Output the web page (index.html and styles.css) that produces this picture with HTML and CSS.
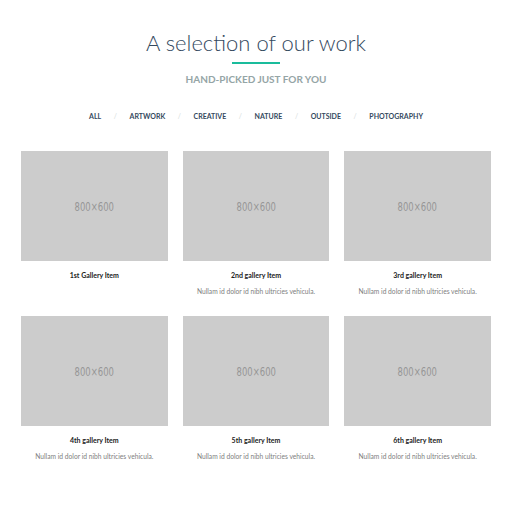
FILE: index.html
```html
<!DOCTYPE html>
<html lang="en">
<head>
<meta charset="utf-8">
<title>Gallery</title>
<link rel="stylesheet" href="styles.css">
</head>
<body>
<section class="portfolio">
  <header class="head">
    <h1 class="title">A selection of our work</h1>
    <div class="rule"></div>
    <p class="subtitle">HAND-PICKED JUST FOR YOU</p>
  </header>
  <nav class="filters">
    <a class="filter">ALL</a><span class="sep">/</span>
    <a class="filter">ARTWORK</a><span class="sep">/</span>
    <a class="filter">CREATIVE</a><span class="sep">/</span>
    <a class="filter">NATURE</a><span class="sep">/</span>
    <a class="filter">OUTSIDE</a><span class="sep">/</span>
    <a class="filter">PHOTOGRAPHY</a>
  </nav>
  <div class="grid">
    <div class="item">
      <div class="thumb"><span>800×600</span></div>
      <h3 class="item-title">1st Gallery Item</h3>
    </div>
    <div class="item">
      <div class="thumb"><span>800×600</span></div>
      <h3 class="item-title">2nd gallery Item</h3>
      <p class="item-desc">Nullam id dolor id nibh ultricies vehicula.</p>
    </div>
    <div class="item">
      <div class="thumb"><span>800×600</span></div>
      <h3 class="item-title">3rd gallery Item</h3>
      <p class="item-desc">Nullam id dolor id nibh ultricies vehicula.</p>
    </div>
    <div class="item">
      <div class="thumb"><span>800×600</span></div>
      <h3 class="item-title">4th gallery Item</h3>
      <p class="item-desc">Nullam id dolor id nibh ultricies vehicula.</p>
    </div>
    <div class="item">
      <div class="thumb"><span>800×600</span></div>
      <h3 class="item-title">5th gallery Item</h3>
      <p class="item-desc">Nullam id dolor id nibh ultricies vehicula.</p>
    </div>
    <div class="item">
      <div class="thumb"><span>800×600</span></div>
      <h3 class="item-title">6th gallery Item</h3>
      <p class="item-desc">Nullam id dolor id nibh ultricies vehicula.</p>
    </div>
  </div>
</section>
</body>
</html>
```
FILE: styles.css
```css
* { box-sizing: border-box; }
html, body { margin: 0; padding: 0; background: #fff; }
body {
  font-family: Lato, "Open Sans", sans-serif;
  color: #34495e;
}
.portfolio {
  padding: 30px 21px 40px;
}
.head {
  display: flex;
  flex-direction: column;
  align-items: center;
}
.title {
  margin: 0;
  font-size: 22px;
  font-weight: 300;
  line-height: 1.2;
  color: #34495e;
}
.rule {
  width: 48px;
  height: 2px;
  margin-top: 6px;
  background: #1abc9c;
}
.subtitle {
  margin: 9px 0 0;
  font-size: 10px;
  line-height: 1.2;
  font-weight: 700;
  color: #95a5a6;
}
.filters {
  display: flex;
  justify-content: center;
  align-items: center;
  margin-top: 26px;
  font-size: 7px;
  line-height: 10px;
  font-weight: 700;
}
.filter {
  color: #34495e;
}
.sep {
  color: #d5dbdb;
  font-weight: 400;
  margin: 0 12.6px;
}
.grid {
  display: grid;
  grid-template-columns: repeat(3, 1fr);
  column-gap: 15px;
  row-gap: 20px;
  margin-top: 30px;
}
.item {
  display: flex;
  flex-direction: column;
  align-items: center;
}
.thumb {
  width: 100%;
  aspect-ratio: 4 / 3;
  background: #cccccc;
  display: flex;
  align-items: center;
  justify-content: center;
}
.thumb span {
  font-family: "DejaVu Sans", sans-serif;
  font-size: 13px;
  color: #969696;
  transform: scaleX(0.65);
}
.item-title {
  margin: 9px 0 0;
  font-size: 7px;
  line-height: 10px;
  font-weight: 700;
  color: #222;
}
.item-desc {
  margin: 6px 0 0;
  font-size: 6.7px;
  line-height: 10px;
  color: #808080;
}
```
